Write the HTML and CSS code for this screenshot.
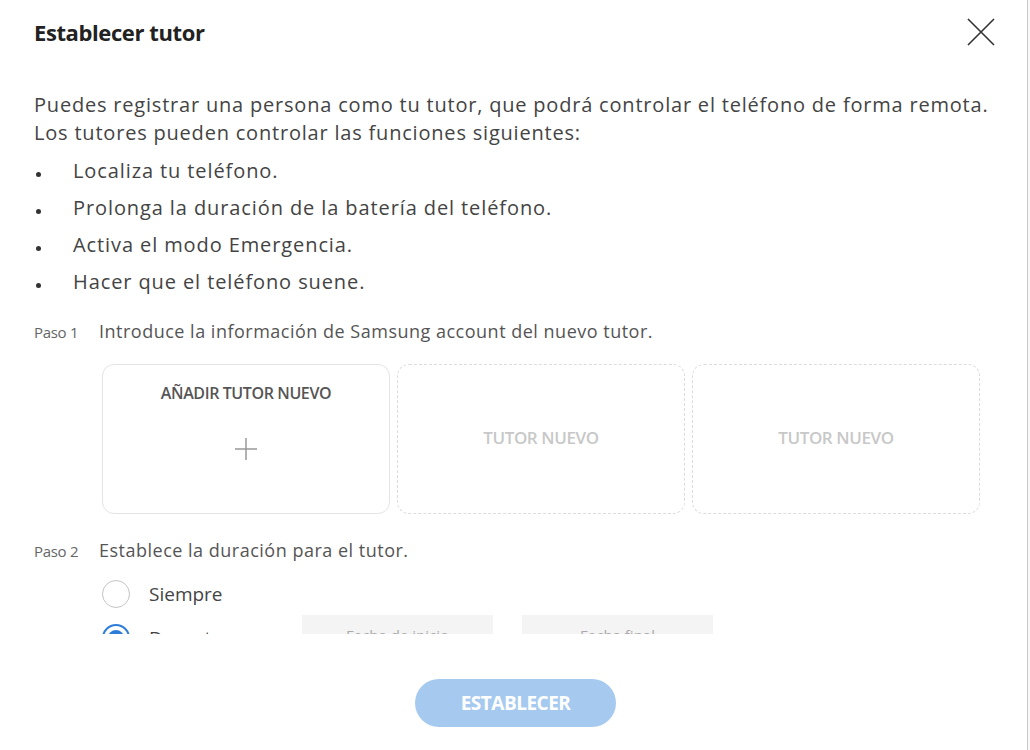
FILE: index.html
```html
<!DOCTYPE html>
<html lang="es">
<head>
    <meta charset="UTF-8">
    <meta name="viewport" content="width=device-width, initial-scale=1.0">
    <title>Establecer tutor</title>
    <link rel="stylesheet" href="styles.css">
</head>
<body>
    <div class="page">
        <div class="dialog">
            <div class="dialog-header">
                <h1>Establecer tutor</h1>
                <button class="close-btn" aria-label="Cerrar">
                    <svg width="28" height="28" viewBox="0 0 28 28">
                        <path d="M1 1 L27 27 M27 1 L1 27" stroke="#333" stroke-width="1.6" fill="none"/>
                    </svg>
                </button>
            </div>

            <div class="dialog-body">
                <p class="intro">Puedes registrar una persona como tu tutor, que podrá controlar el teléfono de forma remota.<br>Los tutores pueden controlar las funciones siguientes:</p>
                <ul class="features">
                    <li>Localiza tu teléfono.</li>
                    <li>Prolonga la duración de la batería del teléfono.</li>
                    <li>Activa el modo Emergencia.</li>
                    <li>Hacer que el teléfono suene.</li>
                </ul>

                <!-- Paso 1 -->
                <div class="step">
                    <span class="step-label">Paso 1</span>
                    <span class="step-text">Introduce la información de Samsung account del nuevo tutor.</span>
                </div>
                <div class="cards">
                    <div class="card card-add">
                        <span class="card-title">AÑADIR TUTOR NUEVO</span>
                        <svg class="plus" width="24" height="24" viewBox="0 0 24 24">
                            <path d="M12 1 V23 M1 12 H23" stroke="#999" stroke-width="1.5" fill="none"/>
                        </svg>
                    </div>
                    <div class="card card-empty">TUTOR NUEVO</div>
                    <div class="card card-empty">TUTOR NUEVO</div>
                </div>

                <!-- Paso 2 -->
                <div class="step step-2">
                    <span class="step-label">Paso 2</span>
                    <span class="step-text">Establece la duración para el tutor.</span>
                </div>
                <div class="options">
                    <label class="option">
                        <span class="radio"></span>
                        <span>Siempre</span>
                    </label>
                    <label class="option">
                        <span class="radio checked"></span>
                        <span class="option-text">Durante</span>
                        <span class="date-box">Fecha de inicio</span>
                        <span class="date-box">Fecha final</span>
                    </label>
                </div>
            </div>

            <div class="dialog-footer">
                <button class="submit-btn">ESTABLECER</button>
            </div>
        </div>
        <div class="edge"></div>
    </div>
</body>
</html>
```

FILE: styles.css
```css
body {
    margin: 0;
    background-color: #ffffff;
    font-family: "Open Sans", "Noto Sans", sans-serif;
    color: #333;
}

.page {
    display: flex;
    height: 750px;
}

.dialog {
    width: 1027px;
    display: flex;
    flex-direction: column;
}

.edge {
    flex: 1;
    border-left: 1px solid #c8c8c8;
    background-color: #fafafa;
}

.dialog-header {
    height: 64px;
    display: flex;
    align-items: center;
    justify-content: space-between;
    padding: 0 34px 0 34px;
}

h1 {
    margin: 0;
    font-size: 22px;
    font-weight: 700;
    color: #222;
    letter-spacing: -0.4px;
}

.close-btn {
    background: none;
    border: none;
    padding: 0;
    margin-right: -2px;
    width: 28px;
    height: 28px;
    cursor: pointer;
}

.dialog-body {
    height: 543px;
    padding: 27px 34px 0 34px;
    overflow: hidden;
}

.intro {
    margin: 0;
    font-size: 20px;
    line-height: 28px;
    letter-spacing: 0.8px;
    color: #444;
}

.features {
    margin: 5px 0 0 0;
    padding: 0;
    list-style: none;
}

.features li {
    position: relative;
    padding-left: 39px;
    font-size: 20px;
    line-height: 37px;
    letter-spacing: 0.9px;
    color: #444;
}

.features li::before {
    content: "";
    position: absolute;
    left: 2px;
    top: 20px;
    width: 5px;
    height: 5px;
    border-radius: 50%;
    background-color: #333;
}

.step {
    display: flex;
    align-items: baseline;
    margin-top: 19px;
    line-height: 24px;
}

.step-2 {
    margin-top: 24px;
}

.step-label {
    width: 65px;
    font-size: 15px;
    color: #666;
    letter-spacing: -0.3px;
}

.step-text {
    font-size: 18px;
    letter-spacing: 0.5px;
    color: #555;
}

.cards {
    display: grid;
    grid-template-columns: repeat(3, 288px);
    gap: 7px;
    margin: 20px 0 0 68px;
}

.card {
    height: 150px;
    box-sizing: border-box;
    border-radius: 12px;
    display: flex;
    flex-direction: column;
    align-items: center;
}

.card-add {
    border: 1.5px solid #e4e4e4;
    padding-top: 17px;
}

.card-title {
    font-size: 16px;
    font-weight: 600;
    color: #555;
    letter-spacing: -0.4px;
}

.plus {
    margin-top: 33px;
}

.card-empty {
    border: 1.5px dashed #dcdcdc;
    justify-content: center;
    font-size: 17px;
    font-weight: 600;
    color: #c8c8c8;
    letter-spacing: -0.4px;
    padding-bottom: 4px;
}

.options {
    margin: 11px 0 0 68px;
}

.option {
    display: flex;
    align-items: center;
    height: 40px;
    font-size: 19px;
    color: #444;
}

.option + .option {
    height: 46px;
    margin-top: 1px;
}

.radio {
    width: 28px;
    height: 28px;
    box-sizing: border-box;
    border: 1.5px solid #c4c4c4;
    border-radius: 50%;
    margin-right: 19px;
    flex-shrink: 0;
}

.radio.checked {
    border: 2px solid #2d7dd8;
    display: flex;
    align-items: center;
    justify-content: center;
}

.radio.checked::after {
    content: "";
    width: 16px;
    height: 16px;
    border-radius: 50%;
    background-color: #2d7dd8;
}

.option-text {
    width: 153px;
}

.date-box {
    width: 191px;
    height: 40px;
    margin-right: 29px;
    background-color: #f4f4f4;
    display: flex;
    align-items: center;
    justify-content: center;
    font-size: 15px;
    color: #aaa;
    align-self: flex-start;
}

.dialog-footer {
    display: flex;
    justify-content: center;
    padding: 45px 0 0 4px;
}

.submit-btn {
    width: 201px;
    height: 48px;
    border: none;
    border-radius: 24px;
    background-color: #a5c9ef;
    color: #fff;
    font-family: "Open Sans", sans-serif;
    font-size: 19px;
    font-weight: 700;
    letter-spacing: -0.5px;
    cursor: pointer;
}
```
